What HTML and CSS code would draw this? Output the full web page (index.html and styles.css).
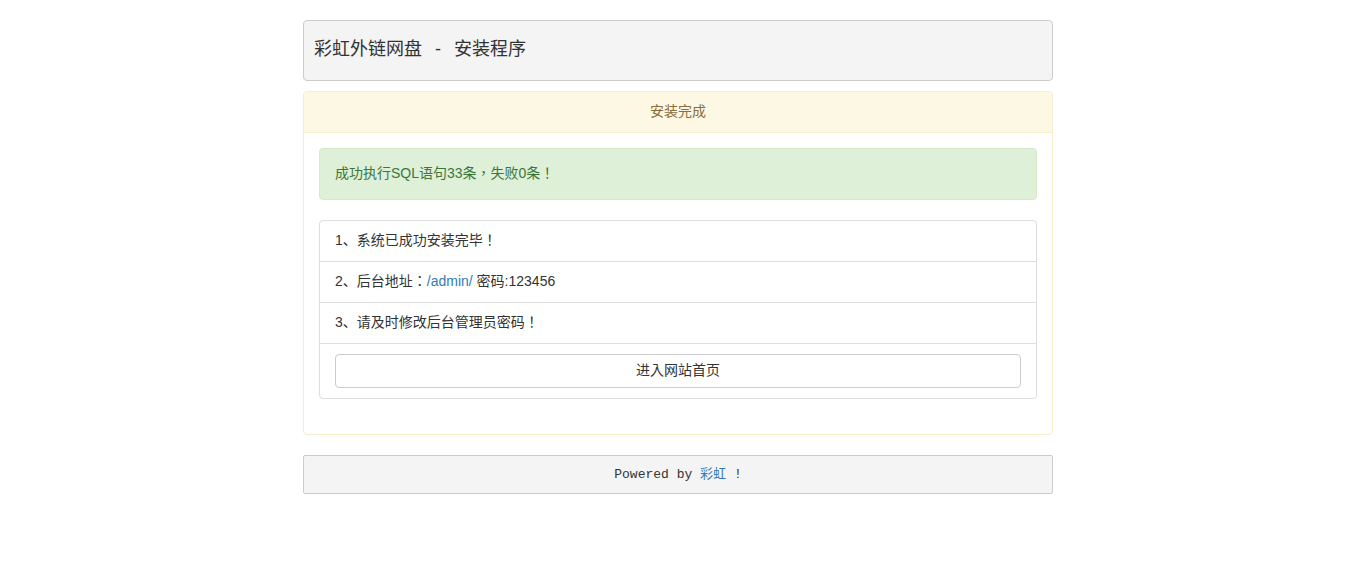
FILE: index.html
```html
<!DOCTYPE html>
<html lang="zh-TW">
<head>
<meta charset="utf-8">
<title>彩虹外链网盘 - 安装程序</title>
<link rel="stylesheet" href="styles.css">
</head>
<body>
<div class="container">
  <div class="topbar">彩虹外链网盘<span class="sep">-</span>安装程序</div>
  <div class="panel">
    <div class="panel-heading">安装完成</div>
    <div class="panel-body">
      <div class="alert">成功执行SQL语句33条，失败0条！</div>
      <ul class="list-group">
        <li class="list-item">1<span lang="zh-CN">、</span>系统已成功安装完毕！</li>
        <li class="list-item">2<span lang="zh-CN">、</span>后台地址：<a href="#">/admin/</a> 密码:123456</li>
        <li class="list-item">3<span lang="zh-CN">、</span>请及时修改后台管理员密码！</li>
        <li class="list-item"><a class="btn" href="#">进入网站首页</a></li>
      </ul>
    </div>
  </div>
  <div class="footer">Powered by <a href="#">彩虹</a> !</div>
</div>
</body>
</html>
```
FILE: styles.css
```css
* { box-sizing: border-box; }
html, body { margin: 0; padding: 0; }
body {
  background: #fff;
  font-family: "Liberation Sans", "Noto Sans CJK TC", sans-serif;
  font-size: 14px;
  line-height: 20px;
  color: #333;
  text-spacing-trim: space-all;
}
a { color: #337ab7; text-decoration: none; }
.container {
  width: 750px;
  margin: 20px auto 0;
}
.topbar {
  height: 61px;
  background: #f4f4f4;
  border: 1px solid #ccc;
  border-radius: 4px;
  padding: 0 10px 3px;
  display: flex;
  align-items: center;
  font-size: 18px;
  color: #333;
  margin-bottom: 10px;
}
.sep { margin: 0 13px; }
.panel {
  border: 1px solid #faebcc;
  border-radius: 4px;
  background: #fff;
  margin-bottom: 20px;
}
.panel-heading {
  background: #fcf8e3;
  color: #8a6d3b;
  border-bottom: 1px solid #faebcc;
  border-radius: 3px 3px 0 0;
  padding: 9px 15px 11px;
  text-align: center;
}
.panel-body { padding: 15px; }
.alert {
  background: #dff0d8;
  border: 1px solid #d6e9c6;
  color: #3c763d;
  border-radius: 4px;
  padding: 14px 15px 16px;
  margin-bottom: 20px;
}
.list-group {
  list-style: none;
  margin: 0 0 20px;
  padding: 0;
}
.list-item {
  border: 1px solid #ddd;
  padding: 9px 15px 11px;
  margin-bottom: -1px;
}
.list-item:first-child { border-radius: 4px 4px 0 0; }
.list-item:last-child { border-radius: 0 0 4px 4px; margin-bottom: 0; padding: 10px 15px; }
.btn {
  display: block;
  width: 100%;
  padding: 5px 12px 7px;
  border: 1px solid #ccc;
  border-radius: 4px;
  background: #fff;
  color: #333;
  text-align: center;
}
.footer {
  height: 39px;
  background: #f4f4f4;
  border: 1px solid #ccc;
  border-radius: 2px;
  display: flex;
  align-items: center;
  justify-content: center;
  font-family: "Liberation Mono", "Noto Sans CJK TC", monospace;
  font-size: 13px;
  color: #333;
  white-space: pre;
}
```
